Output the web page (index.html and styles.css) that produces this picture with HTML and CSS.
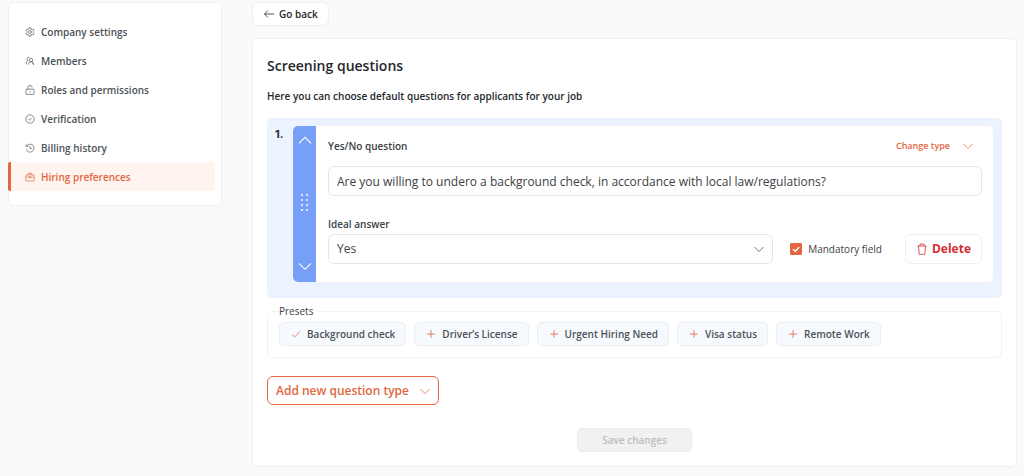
FILE: index.html
```html
<!DOCTYPE html>
<html lang="en">
<head>
<meta charset="utf-8">
<meta name="viewport" content="width=device-width, initial-scale=1">
<title>Screening questions</title>
<link rel="stylesheet" href="styles.css">
</head>
<body>
<svg class="sprite" aria-hidden="true">
  <symbol id="chevron-down" viewBox="0 0 12 12"><path d="M1.500 4 6 8.500 10.500 4"/></symbol>
  <symbol id="chevron-up" viewBox="0 0 12 12"><path d="M1.500 8.500 6 4 10.500 8.500"/></symbol>
  <symbol id="plus" viewBox="0 0 12 12"><path d="M6 2v8M2 6h8"/></symbol>
  <symbol id="check" viewBox="0 0 12 12"><path d="M2 6.500 4.600 9 10 3.500"/></symbol>
</svg>
<div class="page">
  <nav class="sidebar" aria-label="Settings">
    <a class="nav-item" href="#company">
      <svg class="icon nav-icon" viewBox="0 0 24 24"><path d="M10 2h4l.7 3 2.3 1.300 3-1 2 3.500L19.800 11v2l2.200 2.200-2 3.500-3-1-2.300 1.300-.7 3h-4l-.7-3L7 17.700l-3 1-2-3.500L4.200 13v-2L2 8.800l2-3.500 3 1L9.300 5z"/><circle cx="12" cy="12" r="3.500"/></svg>
      Company settings</a>
    <a class="nav-item" href="#members">
      <svg class="icon nav-icon" viewBox="0 0 24 24"><path d="M11 3.500a4 4 0 1 0-3 7.300M3 20v-3q0-4 4-5.500"/><circle cx="14.500" cy="9.500" r="4"/><path d="M8.500 21v-2q0-5 6-5t6 5v2M17 14l4 7"/></svg>
      Members</a>
    <a class="nav-item" href="#roles">
      <svg class="icon nav-icon" viewBox="0 0 24 24"><rect x="2.500" y="10" width="19" height="12.500" rx="1"/><path d="M7 10V6a5 5 0 0 1 10 0M12 14.500v3.500"/></svg>
      Roles and permissions</a>
    <a class="nav-item" href="#verification">
      <svg class="icon nav-icon" viewBox="0 0 24 24"><circle cx="12" cy="12" r="10"/><path d="m8 12 3 3 5-5.500"/></svg>
      Verification</a>
    <a class="nav-item" href="#billing">
      <svg class="icon nav-icon" viewBox="0 0 24 24"><path d="M4 7.500A9.500 9.500 0 1 1 3 15M3 3v5h5M12 7v6h5"/></svg>
      Billing history</a>
    <a class="nav-item nav-item-active" href="#hiring" aria-current="page">
      <svg class="icon nav-icon" viewBox="0 0 24 24"><rect x="2" y="7" width="20" height="14.500" rx="1"/><path d="M7.500 7V3h9v4M2 12.500h8M14 12.500h8M10 11h4v3h-4z"/></svg>
      Hiring preferences</a>
  </nav>

  <main class="main">
    <button class="button back-button" type="button">
      <svg class="icon back-icon" viewBox="0 0 12 12"><path d="M11 6H1.500M5 2.500 1.500 6 5 9.500"/></svg>
      Go back
    </button>

    <form class="panel">
      <h1 class="title">Screening questions</h1>
      <p class="subtitle">Here you can choose default questions for applicants for your job</p>

      <section class="question">
        <span class="number">1.</span>
        <div class="question-card">
          <div class="mover">
            <button class="move-button" type="button" aria-label="Move up"><svg class="icon move-icon"><use href="#chevron-up"/></svg></button>
            <svg class="grip" viewBox="0 0 8 18" aria-hidden="true"><path d="M0 1h2M5 1h2M0 6h2M5 6h2M0 11h2M5 11h2M0 16h2M5 16h2"/></svg>
            <button class="move-button" type="button" aria-label="Move down"><svg class="icon move-icon"><use href="#chevron-down"/></svg></button>
          </div>
          <div class="fields">
            <div class="field-head">
              <label class="label" for="question">Yes/No question</label>
              <button class="change-type" type="button">Change type <svg class="icon chevron"><use href="#chevron-down"/></svg></button>
            </div>
            <input class="control" id="question" type="text" value="Are you willing to undero a background check, in accordance with local law/regulations?">
            <label class="label answer-label" for="answer">Ideal answer</label>
            <div class="answer-row">
              <div class="select-wrap">
                <select class="control" id="answer"><option>Yes</option><option>No</option></select>
                <svg class="icon select-icon"><use href="#chevron-down"/></svg>
              </div>
              <label class="mandatory">
                <span class="tick">
                  <input class="tick-input" type="checkbox" checked>
                  <svg class="tick-mark" viewBox="0 0 12 12"><path d="M3 6.200 5.200 8.300 9.200 4.200"/></svg>
                </span>
                Mandatory field
              </label>
              <button class="button delete-button" type="button">
                <svg class="icon delete-icon" viewBox="0 0 12 12"><path d="M1.500 3h9M4 3V1h4v2M2.500 3l.7 8.300h5.600L9.500 3"/></svg>
                Delete
              </button>
            </div>
          </div>
        </div>
      </section>

      <fieldset class="presets">
        <legend class="legend">Presets</legend>
        <div class="chips">
          <button class="chip" type="button" aria-pressed="true"><svg class="icon chip-icon"><use href="#check"/></svg>Background check</button>
          <button class="chip" type="button"><svg class="icon chip-icon"><use href="#plus"/></svg>Driver’s License</button>
          <button class="chip" type="button"><svg class="icon chip-icon"><use href="#plus"/></svg>Urgent Hiring Need</button>
          <button class="chip" type="button"><svg class="icon chip-icon"><use href="#plus"/></svg>Visa status</button>
          <button class="chip" type="button"><svg class="icon chip-icon"><use href="#plus"/></svg>Remote Work</button>
        </div>
      </fieldset>

      <button class="button add-button" type="button">Add new question type <svg class="icon chevron"><use href="#chevron-down"/></svg></button>
      <button class="button save-button" type="submit" disabled>Save changes</button>
    </form>
  </main>
</div>
</body>
</html>
```

FILE: styles.css
```css
* { box-sizing: border-box; }

body {
  margin: 0;
  background: #f9fbfa;
  color: #26282b;
  font: 600 10px/16px "Open Sans", sans-serif;
}

button, input, select {
  font: inherit;
  color: inherit;
}

button { cursor: pointer; }

.sprite { display: none; }

.icon {
  width: 12px;
  height: 12px;
  flex: none;
  fill: none;
  stroke: currentColor;
  stroke-width: 0.8;
}

.page {
  display: grid;
  grid-template-columns: 214px minmax(0, 1fr);
  gap: 30px;
  align-items: start;
  padding: 2px 7px 10px 8px;
}

.sidebar {
  padding: 14px 6px 14px 0;
  background: #fff;
  border: 1px solid #eef1f1;
  border-left-width: 0;
  border-radius: 6px;
  box-shadow: inset 1px 0 #eef1f1;
}

.nav-item {
  display: flex;
  align-items: center;
  gap: 6px;
  height: 29px;
  padding-left: 14px;
  border-left: 3px solid transparent;
  color: #4b5256;
  text-decoration: none;
}

.nav-item-active {
  background: #fff4ef;
  border-left-color: #e2673f;
  border-radius: 2px 0 0 2px;
  color: #e2673f;
}

.nav-icon {
  width: 10px;
  height: 10px;
  stroke-width: 1.6;
}

.main {
  display: flex;
  flex-direction: column;
  align-items: flex-start;
  gap: 12px;
}

.button {
  display: inline-flex;
  align-items: center;
  background: #fff;
  border: 1px solid #eceeef;
  border-radius: 6px;
}

.back-button {
  gap: 4px;
  height: 24px;
  padding: 0 10px;
}

.panel {
  display: flex;
  flex-direction: column;
  align-items: flex-start;
  width: 100%;
  padding: 16px 14px 14px;
  background: #fff;
  border: 1px solid #eef1f1;
  border-radius: 5px;
}

.title {
  margin: 0;
  font-size: 14px;
  font-weight: 600;
  line-height: 22px;
}

.subtitle { margin: 11px 0 14px; }

.question {
  display: flex;
  width: 100%;
  padding: 8px 9px 16px 8px;
  background: #edf3fe;
  border-radius: 5px;
}

.number {
  width: 18px;
  font-family: Inter, sans-serif;
  font-size: 11px;
  font-weight: 700;
}

.question-card {
  display: flex;
  flex: 1;
  overflow: hidden;
  background: #fff;
  border-radius: 5px;
}

.mover {
  display: flex;
  flex-direction: column;
  align-items: center;
  justify-content: space-between;
  width: 23px;
  padding: 6px 0 8px;
  background: #779ff7;
  color: #fff;
}

.move-button {
  display: flex;
  padding: 0;
  background: none;
  border: 0;
}

.move-icon { width: 16px; height: 16px; }

.grip {
  width: 8px;
  height: 18px;
  stroke: #dbe6fd;
  stroke-width: 2;
}

.fields {
  flex: 1;
  padding: 12px 11px 18px 12px;
}

.field-head {
  display: flex;
  align-items: center;
  justify-content: space-between;
  padding-right: 8px;
  margin-bottom: 12px;
}

.label {
  display: block;
  color: #3d4144;
}

.change-type {
  display: flex;
  align-items: center;
  gap: 12px;
  padding: 0;
  background: none;
  border: 0;
  color: #e2673f;
  font-size: 9px;
}

.control {
  display: block;
  width: 100%;
  height: 30px;
  padding: 0 8px;
  appearance: none;
  background: #fff;
  border: 1px solid #e4e5e6;
  border-radius: 6px;
  color: #3d4144;
  font-size: 12px;
  font-weight: 400;
}

.answer-label { margin: 20px 0 2px; }

.answer-row {
  display: flex;
  align-items: center;
}

.select-wrap {
  position: relative;
  flex: 1;
}

.select-icon {
  position: absolute;
  top: 9px;
  right: 8px;
  color: #4b5256;
  pointer-events: none;
}

.mandatory {
  display: flex;
  align-items: center;
  gap: 6px;
  margin: 0 23px 0 17px;
  color: #3d4144;
  font-weight: 400;
}

.tick {
  display: grid;
  width: 12px;
  height: 12px;
}

.tick-input,
.tick-mark {
  grid-area: 1 / 1;
  width: 12px;
  height: 12px;
  margin: 0;
}

.tick-input {
  appearance: none;
  border: 1px solid #e2673f;
  border-radius: 1px;
}

.tick-input:checked { background: #e2673f; }

.tick-mark {
  fill: none;
  stroke: #fff;
  stroke-width: 1.5;
  pointer-events: none;
}

.delete-button {
  gap: 4px;
  height: 30px;
  padding: 0 10px;
  color: #d32f35;
  font-size: 12px;
  font-weight: 700;
}

.presets {
  width: 100%;
  min-width: 0;
  margin: 5px 0 18px;
  padding: 3px 11px 11px;
  border: 1px solid #f1f2f3;
  border-radius: 5px;
}

.legend {
  padding: 0 4px 0 0;
  color: #3d4144;
  font-weight: 400;
}

.chips {
  display: flex;
  flex-wrap: wrap;
  gap: 8px;
}

.chip {
  display: flex;
  align-items: center;
  gap: 5px;
  height: 24px;
  padding: 0 10px;
  background: #f6f9fe;
  border: 1px solid #e9eef3;
  border-radius: 5px;
  color: #4b5256;
}

.chip-icon { color: #e2673f; }

.add-button {
  gap: 10px;
  height: 29px;
  padding: 0 7px 0 8px;
  border-color: #e2673f;
  color: #e2673f;
  font-size: 12px;
}

.save-button {
  align-self: center;
  height: 24px;
  margin-top: 23px;
  padding: 0 24px;
  background: #f1f1f1;
  border-color: #ececec;
  border-radius: 5px;
  color: #bdbdbd;
  cursor: default;
}
```
